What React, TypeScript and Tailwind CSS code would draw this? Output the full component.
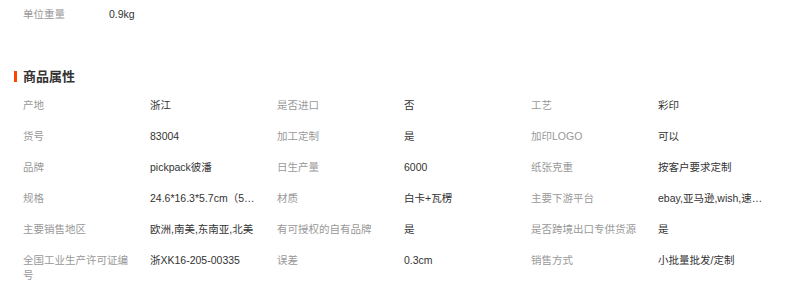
export default function App() {
  const rows = [
    ["产地", "浙江", "是否进口", "否", "工艺", "彩印"],
    ["货号", "83004", "加工定制", "是", "加印LOGO", "可以"],
    ["品牌", "pickpack彼潘", "日生产量", "6000", "纸张克重", "按客户要求定制"],
    ["规格", "24.6*16.3*5.7cm（5.5cm）", "材质", "白卡+瓦楞", "主要下游平台", "ebay,亚马逊,wish,速卖通"],
    ["主要销售地区", "欧洲,南美,东南亚,北美", "有可授权的自有品牌", "是", "是否跨境出口专供货源", "是"],
    ["全国工业生产许可证编号", "浙XK16-205-00335", "误差", "0.3cm", "销售方式", "小批量批发/定制"],
  ];

  return (
    <div
      className="w-[800px] h-[282px] bg-white overflow-hidden text-[10.5px]"
      style={{ fontFamily: '"Liberation Sans", "Noto Sans CJK SC", sans-serif' }}
    >
      {/* 单位重量 */}
      <div className="flex pl-[23px] pt-[7px] leading-[15px]">
        <span className="w-[86px] text-[#999]">单位重量</span>
        <span className="text-[#333]">0.9kg</span>
      </div>

      {/* 标题 */}
      <div className="flex items-center mt-[46px] pl-[14px] h-[16px]">
        <span className="w-[3px] h-[11px] bg-[#ff4400] mr-[6px]" />
        <h2
          className="text-[13px] font-bold text-[#333] leading-[16px]"
          style={{ fontFamily: '"Noto Sans CJK SC", sans-serif' }}
        >
          商品属性
        </h2>
      </div>

      {/* 属性 */}
      <div className="grid grid-cols-[127px_127px_127px_127px_127px_127px] pl-[23px] mt-[6px]">
        {rows.map((row, i) =>
          row.map((cell, j) => (
            <div
              key={i + "-" + j}
              className={
                j % 2 === 0
                  ? "py-[8px] pr-[14px] leading-[15px] text-[#999]"
                  : "py-[8px] pr-[21px] leading-[15px] text-[#333] truncate"
              }
            >
              {cell}
            </div>
          ))
        )}
      </div>
    </div>
  );
}
